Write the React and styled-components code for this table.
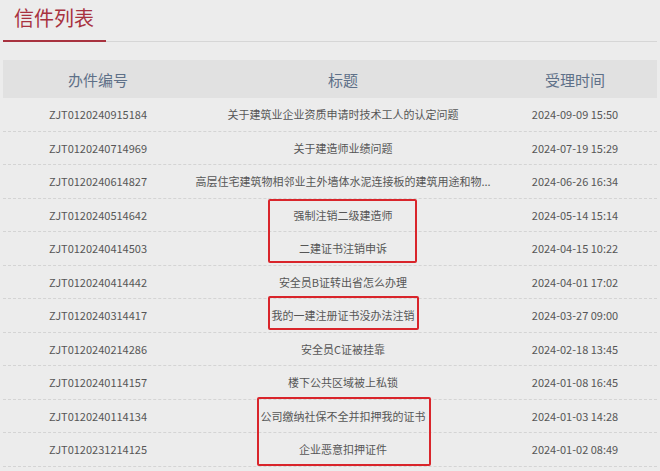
import React from 'react';
import styled, { createGlobalStyle } from 'styled-components';

const GlobalStyle = createGlobalStyle`
  html, body {
    margin: 0;
    padding: 0;
    background: #ececec;
  }
  body {
    font-family: "Noto Sans CJK SC", "Microsoft YaHei", "Noto Sans", sans-serif;
  }
`;

const Page = styled.div`
  width: 660px;
  height: 471px;
  overflow: hidden;
  padding: 0 3px;
  box-sizing: border-box;
`;

const TitleBar = styled.div`
  display: flex;
  border-bottom: 1px solid #d6d6d6;
`;

const Tab = styled.div`
  height: 42px;
  line-height: 36px;
  padding: 0 12px 0 11px;
  font-size: 20px;
  color: #a8323f;
  border-bottom: 2px solid #a8323f;
  margin-bottom: -1px;
  box-sizing: border-box;
`;

const Table = styled.div`
  margin-top: 18px;
`;

const HeadRow = styled.div`
  display: grid;
  grid-template-columns: 190px 300px 1fr;
  height: 38px;
  align-items: center;
  background: #e1e1e1;
  font-size: 15px;
  color: #5e7088;
  text-align: center;
`;

const Body = styled.div`
  position: relative;
`;

const Row = styled.div`
  display: grid;
  grid-template-columns: 190px 300px 1fr;
  height: 33.5px;
  align-items: center;
  border-bottom: 1px dashed #d4d4d4;
  box-sizing: border-box;
  font-size: 11px;
  color: #565656;
  text-align: center;
`;

const Cell = styled.div`
  white-space: nowrap;
`;

const Mark = styled.div`
  position: absolute;
  border: 2px solid #d9252b;
  border-radius: 2px;
  box-sizing: border-box;
  pointer-events: none;
`;

const rows = [
  ['ZJT0120240915184', '关于建筑业企业资质申请时技术工人的认定问题', '2024-09-09 15:50'],
  ['ZJT0120240714969', '关于建造师业绩问题', '2024-07-19 15:29'],
  ['ZJT0120240614827', '高层住宅建筑物相邻业主外墙体水泥连接板的建筑用途和物...', '2024-06-26 16:34'],
  ['ZJT0120240514642', '强制注销二级建造师', '2024-05-14 15:14'],
  ['ZJT0120240414503', '二建证书注销申诉', '2024-04-15 10:22'],
  ['ZJT0120240414442', '安全员B证转出省怎么办理', '2024-04-01 17:02'],
  ['ZJT0120240314417', '我的一建注册证书没办法注销', '2024-03-27 09:00'],
  ['ZJT0120240214286', '安全员C证被挂靠', '2024-02-18 13:45'],
  ['ZJT0120240114157', '楼下公共区域被上私锁', '2024-01-08 16:45'],
  ['ZJT0120240114134', '公司缴纳社保不全并扣押我的证书', '2024-01-03 14:28'],
  ['ZJT0120231214125', '企业恶意扣押证件', '2024-01-02 08:49'],
];

// red annotation boxes drawn over the list
const marks = [
  { left: 265, top: 101, width: 149, height: 64 },
  { left: 265, top: 198, width: 151, height: 34 },
  { left: 254, top: 299, width: 174, height: 69 },
];

const App = () => {
  return (
    <Page>
      <GlobalStyle />
      <TitleBar>
        <Tab>信件列表</Tab>
      </TitleBar>
      <Table>
        <HeadRow>
          <div>办件编号</div>
          <div>标题</div>
          <div>受理时间</div>
        </HeadRow>
        <Body>
          {rows.map(r => (
            <Row key={r[0]}>
              <Cell>{r[0]}</Cell>
              <Cell>{r[1]}</Cell>
              <Cell>{r[2]}</Cell>
            </Row>
          ))}
          {marks.map((m, i) => (
            <Mark key={i} style={m} />
          ))}
        </Body>
      </Table>
    </Page>
  );
};

export default App;
